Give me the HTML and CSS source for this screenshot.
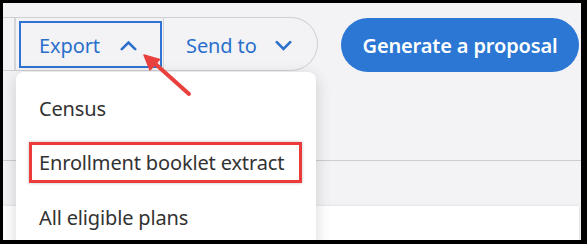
FILE: index.html
```html
<!DOCTYPE html>
<html lang="en">
<head>
<meta charset="utf-8">
<title>Export menu</title>
<link rel="stylesheet" href="styles.css">
</head>
<body>
<div class="screen">
  <div class="toolbar">
    <div class="btn-group">
      <div class="seg seg-prev"></div>
      <div class="seg seg-export">
        <button class="focus-box" type="button">
          <span>Export</span>
          <svg class="chev" width="17" height="11" viewBox="0 0 17 11"><polyline points="1.8,9.2 8.5,2.5 15.2,9.2" /></svg>
        </button>
        <div class="menu">
          <div class="menu-item">Census</div>
          <div class="menu-item menu-item--marked"><span class="mark">Enrollment booklet extract</span></div>
          <div class="menu-item">All eligible plans</div>
        </div>
      </div>
      <div class="seg seg-send">
        <span>Send to</span>
        <svg class="chev" width="17" height="11" viewBox="0 0 17 11"><polyline points="1.8,2.2 8.5,8.9 15.2,2.2" /></svg>
      </div>
    </div>
    <button class="primary" type="button">Generate a proposal</button>
  </div>
  <div class="band"></div>
  <div class="card"></div>
  <svg class="callout" width="578" height="237" viewBox="0 0 578 237">
    <line x1="186" y1="91" x2="148" y2="57" />
    <polygon points="141,52 156.5,56.5 147,67" />
  </svg>
</div>
</body>
</html>
```
FILE: styles.css
```css
html, body {
  margin: 0;
  padding: 0;
  background: #000;
}

body {
  width: 587px;
  height: 244px;
  overflow: hidden;
  font-family: "Noto Sans", "Open Sans", sans-serif;
}

.screen {
  position: relative;
  margin: 3px 0 0 3px;
  width: 578px;
  height: 237px;
  background: #f3f3f5;
  overflow: hidden;
}

.toolbar {
  display: flex;
  align-items: flex-start;
  padding-top: 14px;
  height: 55px;
}

.btn-group {
  display: flex;
  height: 52px;
  border: 1px solid #cfcfd2;
  border-left: none;
  border-radius: 0 27px 27px 0;
}

.seg {
  display: flex;
  align-items: center;
}

.seg-prev {
  width: 11px;
}

.seg-export {
  position: relative;
  width: 147px;
  border-left: 2px solid #d5d5d8;
  align-items: flex-start;
}

.focus-box {
  display: flex;
  align-items: center;
  justify-content: space-between;
  box-sizing: border-box;
  margin: 3px 0 0 3px;
  width: 143px;
  height: 47px;
  padding: 2px 23px 0 18px;
  border: 2px solid #2f74d2;
  background: transparent;
  font: inherit;
  font-size: 20px;
  letter-spacing: -0.1px;
  color: #2a6fcc;
}

.seg-send {
  width: 154px;
  border-left: 1px solid #d5d5d8;
  justify-content: space-between;
  padding: 2px 25px 0 22px;
  box-sizing: border-box;
  font-size: 20px;
  letter-spacing: -0.1px;
  color: #2a6fcc;
  border-radius: 0 26px 26px 0;
}

.chev {
  display: block;
}

.chev polyline {
  fill: none;
  stroke: #2a6fcc;
  stroke-width: 2.6;
  stroke-linecap: round;
  stroke-linejoin: miter;
}

.primary {
  margin: 1px 0 0 23px;
  width: 238px;
  height: 54px;
  padding-top: 2px;
  border: none;
  border-radius: 27px;
  background: #2b77d3;
  color: #fff;
  font: inherit;
  font-size: 20px;
  font-weight: 600;
  letter-spacing: -0.15px;
}

.band {
  height: 88px;
  border-bottom: 1px solid #cdcdd0;
}

.card {
  margin: 45px 2px 0 0;
  height: 60px;
  background: #fff;
  box-shadow: 0 0 3px rgba(0, 0, 0, 0.12);
}

.menu {
  position: absolute;
  top: 54px;
  left: 0;
  width: 300px;
  height: 200px;
  padding-top: 9px;
  box-sizing: border-box;
  background: #fff;
  border-radius: 8px 8px 0 0;
  box-shadow: 0 4px 16px rgba(0, 0, 0, 0.16);
  z-index: 2;
}

.menu-item {
  display: flex;
  align-items: center;
  height: 54.5px;
  padding-left: 23px;
  font-size: 20px;
  letter-spacing: -0.15px;
  color: #323232;
  white-space: nowrap;
}

.menu-item--marked {
  padding-left: 13px;
}

.mark {
  display: block;
  box-sizing: border-box;
  width: 273px;
  height: 41px;
  line-height: 35px;
  padding-left: 7px;
  border: 3px solid #ec3b3b;
  box-shadow: 0 0 3px rgba(0, 0, 0, 0.25);
}

.callout {
  position: absolute;
  top: 0;
  left: 0;
  z-index: 3;
}

.callout line {
  stroke: #e8413d;
  stroke-width: 4;
  stroke-linecap: round;
}

.callout polygon {
  fill: #e8413d;
  stroke: #e8413d;
  stroke-width: 1.5;
  stroke-linejoin: round;
}
```
